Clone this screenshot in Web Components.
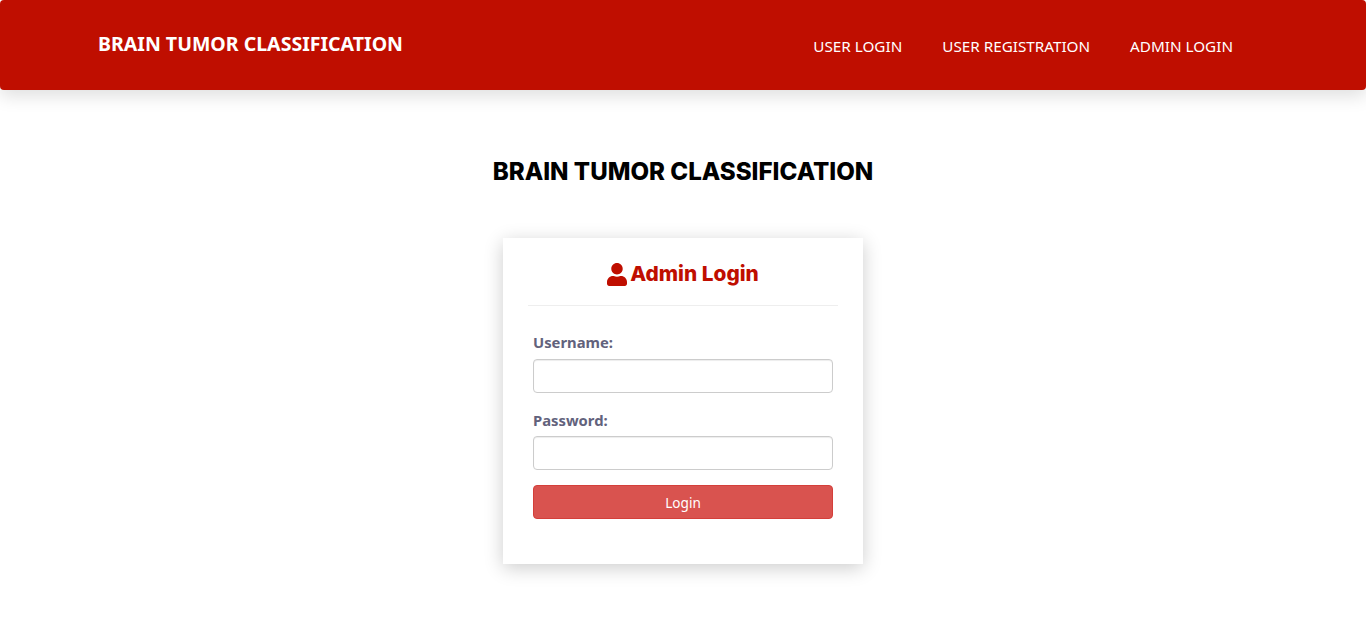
<!DOCTYPE html>
<html lang="en">
<head>
<meta charset="utf-8">
<title>Brain Tumor Classification</title>
<style>
  html, body { margin: 0; padding: 0; background: #fff; }
  body { min-height: 643px; display: flow-root; font-family: "Noto Sans", "Open Sans", sans-serif; }
</style>
</head>
<body>
<app-navbar>
  <nav-link>USER LOGIN</nav-link>
  <nav-link>USER REGISTRATION</nav-link>
  <nav-link>ADMIN LOGIN</nav-link>
</app-navbar>
<page-title>BRAIN TUMOR CLASSIFICATION</page-title>
<login-card>
  <form-field label="Username:"></form-field>
  <form-field label="Password:" type="password"></form-field>
  <login-button>Login</login-button>
</login-card>
<script>
class AppNavbar extends HTMLElement {
  constructor() {
    super();
    this.attachShadow({ mode: "open" });
    this.shadowRoot.innerHTML = `
      <style>
        :host {
          display: flex;
          justify-content: space-between;
          height: 90px;
          box-sizing: border-box;
          padding: 0 133px 0 98px;
          background: #bf0e00;
          border-radius: 4px;
          box-shadow: 0 6px 18px rgba(0, 0, 0, 0.13);
        }
        #brand {
          font-family: "Noto Sans", sans-serif;
          font-weight: 700;
          font-size: 19.55px;
          line-height: 26px;
          padding-top: 31px;
          color: #fff;
        }
        #links { display: flex; gap: 40px; padding-top: 35px; }
      </style>
      <div id="brand">BRAIN TUMOR CLASSIFICATION</div>
      <div id="links"><slot></slot></div>
    `;
  }
}
customElements.define("app-navbar", AppNavbar);

class NavLink extends HTMLElement {
  constructor() {
    super();
    this.attachShadow({ mode: "open" });
    this.shadowRoot.innerHTML = `
      <style>
        :host {
          display: block;
          font-family: "Noto Sans", sans-serif;
          font-size: 15.25px;
          line-height: 22px;
          color: #fff;
        }
      </style>
      <slot></slot>
    `;
  }
}
customElements.define("nav-link", NavLink);

class PageTitle extends HTMLElement {
  constructor() {
    super();
    this.attachShadow({ mode: "open" });
    this.shadowRoot.innerHTML = `
      <style>
        :host {
          display: block;
          margin-top: 63px;
          text-align: center;
          font-family: Inter, sans-serif;
          font-weight: 800;
          font-size: 24.1px;
          line-height: 38px;
          color: #000;
        }
      </style>
      <slot></slot>
    `;
  }
}
customElements.define("page-title", PageTitle);

class LoginCard extends HTMLElement {
  constructor() {
    super();
    this.attachShadow({ mode: "open" });
    this.shadowRoot.innerHTML = `
      <style>
        :host {
          display: block;
          box-sizing: border-box;
          width: 360px;
          height: 326px;
          margin: 47px auto 0;
          padding: 0 25px;
          background: #fff;
          box-shadow: 0 4px 18px rgba(0, 0, 0, 0.2);
        }
        header {
          display: flex;
          justify-content: center;
          align-items: center;
          gap: 3px;
          height: 68px;
          padding-top: 4px;
          box-sizing: border-box;
          border-bottom: 1px solid #eee;
          font-family: Inter, sans-serif;
          font-weight: 800;
          font-size: 20.8px;
          color: #bf0e00;
        }
        svg { width: 20px; height: 23px; margin-top: 1px; fill: #bf0e00; }
        main { padding: 25.3px 5px 0; display: flex; flex-direction: column; }
      </style>
      <header>
        <svg viewBox="0 0 448 512"><path d="M224 256c70.700 0 128-57.300 128-128S294.700 0 224 0 96 57.300 96 128s57.300 128 128 128zm89.600 32h-16.700c-22.200 10.200-46.900 16-72.900 16s-50.600-5.800-72.900-16h-16.700C60.200 288 0 348.200 0 422.400V464c0 26.500 21.500 48 48 48h352c26.500 0 48-21.500 48-48v-41.600c0-74.200-60.200-134.400-134.400-134.400z"/></svg>
        <span>Admin Login</span>
      </header>
      <main><slot></slot></main>
    `;
  }
}
customElements.define("login-card", LoginCard);

class FormField extends HTMLElement {
  constructor() {
    super();
    this.attachShadow({ mode: "open" });
    this.shadowRoot.innerHTML = `
      <style>
        :host { display: block; margin-bottom: 15.7px; }
        label {
          display: block;
          font-family: "Noto Sans", sans-serif;
          font-weight: 700;
          font-size: 14.8px;
          line-height: 22px;
          margin-bottom: 5.7px;
          color: #62627c;
        }
        input {
          display: block;
          box-sizing: border-box;
          width: 100%;
          height: 34px;
          padding: 6px 12px;
          border: 1px solid #ccc;
          border-radius: 4px;
          background: #fff;
          box-shadow: inset 0 1px 1px rgba(0, 0, 0, 0.075);
        }
      </style>
      <label></label>
      <input>
    `;
    this.shadowRoot.querySelector("label").textContent = this.getAttribute("label");
    if (this.getAttribute("type")) {
      this.shadowRoot.querySelector("input").type = this.getAttribute("type");
    }
  }
}
customElements.define("form-field", FormField);

class LoginButton extends HTMLElement {
  constructor() {
    super();
    this.attachShadow({ mode: "open" });
    this.shadowRoot.innerHTML = `
      <style>
        :host { display: block; margin-top: -1px; }
        button {
          display: block;
          box-sizing: border-box;
          width: 100%;
          height: 34px;
          padding: 1px 0 0;
          border: 1px solid #d43f3a;
          border-radius: 4px;
          background: #d9534f;
          color: #fff;
          font-family: "Noto Sans", sans-serif;
          font-size: 13.6px;
        }
      </style>
      <button><slot></slot></button>
    `;
  }
}
customElements.define("login-button", LoginButton);
</script>
</body>
</html>
